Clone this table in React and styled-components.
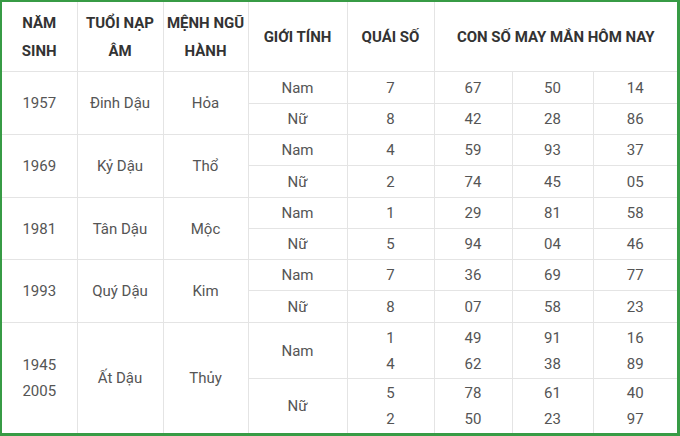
import React from "react";
import styled, { createGlobalStyle } from "styled-components";

const Global = createGlobalStyle`
  html, body { margin: 0; padding: 0; background: #ffffff; }
  body { font-family: Roboto, "Noto Sans", "Liberation Sans", sans-serif; }
`;

const Frame = styled.div`
  width: 680px;
  height: 436px;
  box-sizing: border-box;
  border-style: solid;
  border-color: #379b45;
  border-width: 2px 3px 3px 2px;
  background: #fff;
  overflow: hidden;
`;

const Table = styled.table`
  width: 675px;
  table-layout: fixed;
  border-collapse: collapse;
  border-style: hidden;
`;

const Head = styled.th`
  height: ${(p) => p.$h}px;
  padding: 0;
  border: 1px solid #e4e4e4;
  font-weight: 700;
  font-size: 15px;
  line-height: 28px;
  color: #333;
  text-align: center;
  vertical-align: middle;
`;

const Cell = styled.td`
  padding: 0;
  border: 1px solid #e4e4e4;
  font-size: 15px;
  line-height: 26px;
  color: #555;
  text-align: center;
  vertical-align: middle;
  white-space: nowrap;
`;

const Box = styled.div`
  height: ${(p) => p.$h}px;
  display: flex;
  flex-direction: column;
  align-items: center;
  justify-content: center;
`;

const widths = [75, 86, 85, 99, 87, 78, 81, 84];

const groups = [
  { year: ["1957"], tuoi: "Đinh Dậu", menh: "Hỏa", rows: [
    { g: "Nam", q: ["7"], n: [["67"], ["50"], ["14"]], h: 31 },
    { g: "Nữ", q: ["8"], n: [["42"], ["28"], ["86"]], h: 30 },
  ] },
  { year: ["1969"], tuoi: "Kỷ Dậu", menh: "Thổ", rows: [
    { g: "Nam", q: ["4"], n: [["59"], ["93"], ["37"]], h: 30 },
    { g: "Nữ", q: ["2"], n: [["74"], ["45"], ["05"]], h: 31 },
  ] },
  { year: ["1981"], tuoi: "Tân Dậu", menh: "Mộc", rows: [
    { g: "Nam", q: ["1"], n: [["29"], ["81"], ["58"]], h: 30 },
    { g: "Nữ", q: ["5"], n: [["94"], ["04"], ["46"]], h: 30 },
  ] },
  { year: ["1993"], tuoi: "Quý Dậu", menh: "Kim", rows: [
    { g: "Nam", q: ["7"], n: [["36"], ["69"], ["77"]], h: 30 },
    { g: "Nữ", q: ["8"], n: [["07"], ["58"], ["23"]], h: 31 },
  ] },
  { year: ["1945", "2005"], tuoi: "Ất Dậu", menh: "Thủy", rows: [
    { g: "Nam", q: ["1", "4"], n: [["49", "62"], ["91", "38"], ["16", "89"]], h: 55 },
    { g: "Nữ", q: ["5", "2"], n: [["78", "50"], ["61", "23"], ["40", "97"]], h: 54 },
  ] },
];

const Lines = ({ items }) =>
  items.map((t, i) => (
    <React.Fragment key={i}>
      {i > 0 && <br />}
      {t}
    </React.Fragment>
  ));

export default function App() {
  return (
    <>
      <Global />
      <Frame>
        <Table>
          <colgroup>
            {widths.map((w, i) => (
              <col key={i} style={{ width: w }} />
            ))}
          </colgroup>
          <thead>
            <tr>
              <Head $h={69}>NĂM<br />SINH</Head>
              <Head $h={69}>TUỔI NẠP<br />ÂM</Head>
              <Head $h={69}>MỆNH NGŨ<br />HÀNH</Head>
              <Head $h={69}>GIỚI TÍNH</Head>
              <Head $h={69}>QUÁI SỐ</Head>
              <Head $h={69} colSpan={3}>CON SỐ MAY MẮN HÔM NAY</Head>
            </tr>
          </thead>
          <tbody>
            {groups.map((grp, gi) =>
              grp.rows.map((r, ri) => (
                <tr key={`${gi}-${ri}`}>
                  {ri === 0 && (
                    <>
                      <Cell rowSpan={2}><Lines items={grp.year} /></Cell>
                      <Cell rowSpan={2}>{grp.tuoi}</Cell>
                      <Cell rowSpan={2}>{grp.menh}</Cell>
                    </>
                  )}
                  <Cell><Box $h={r.h}>{r.g}</Box></Cell>
                  <Cell><Box $h={r.h}><Lines items={r.q} /></Box></Cell>
                  {r.n.map((v, vi) => (
                    <Cell key={vi}><Box $h={r.h}><Lines items={v} /></Box></Cell>
                  ))}
                </tr>
              ))
            )}
          </tbody>
        </Table>
      </Frame>
    </>
  );
}
